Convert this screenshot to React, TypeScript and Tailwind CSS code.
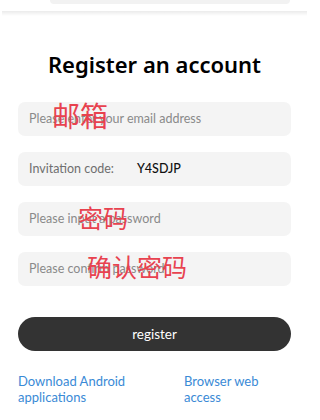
import React from 'react'

const font = { fontFamily: 'Lato, "Noto Sans CJK SC", sans-serif' }
const titleFont = { fontFamily: '"Noto Sans", sans-serif' }

function Field({ children }: { children: React.ReactNode }) {
  return (
    <div className="h-[34px] rounded-[7px] bg-[#f4f4f4] flex items-center px-[11px] text-[12.5px]">
      {children}
    </div>
  )
}

export default function App() {
  return (
    <div className="w-[318px] h-[420px] bg-white overflow-hidden relative" style={font}>
      {/* card peeking from above */}
      <div className="ml-[50px] w-[240px] h-[4px] rounded-b-[6px] bg-[#f2f2f2]" />
      <div className="mt-[7px] ml-[2px] w-[305px] h-[5px] bg-gradient-to-b from-[#ebebeb] to-white" />

      <div className="w-[309px] px-[18px]">
        <h1 className="mt-[33px] text-center text-[22px] font-semibold text-black leading-[30px]" style={titleFont}>
          Register an account
        </h1>

        <div className="mt-[23px] flex flex-col gap-[16px]">
          <Field>
            <span className="text-[#8a8a8a]">Please enter your email address</span>
          </Field>
          <Field>
            <span className="text-[#6f6f6f] w-[108px]">Invitation code:</span>
            <span className="text-[#111] font-medium">Y4SDJP</span>
          </Field>
          <Field>
            <span className="text-[#8a8a8a]">Please input a password</span>
          </Field>
          <Field>
            <span className="text-[#8a8a8a]">Please confirm password</span>
          </Field>
        </div>

        <button className="mt-[31px] w-full h-[34px] rounded-full bg-[#333333] text-white text-[13.5px]">
          register
        </button>

        <div className="mt-[22px] flex text-[13px] leading-[16px] text-[#3a8ad6]">
          <a className="w-[166px]">Download Android applications</a>
          <a className="w-[100px]">Browser web access</a>
        </div>
      </div>

      {/* red annotations */}
      <span className="absolute left-[52px] top-[98px] text-[28px] leading-[36px] text-[#e8424f]">邮箱</span>
      <span className="absolute left-[78px] top-[202px] text-[25px] leading-[32px] text-[#e8424f]">密码</span>
      <span className="absolute left-[87px] top-[251px] text-[25px] leading-[32px] text-[#e8424f]">确认密码</span>
    </div>
  )
}
